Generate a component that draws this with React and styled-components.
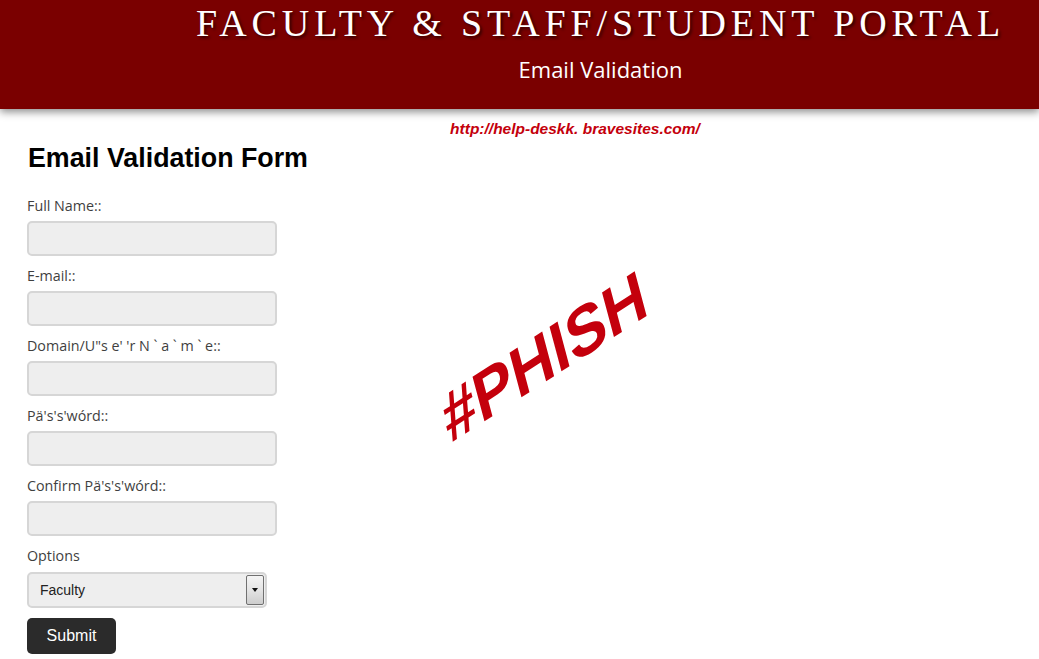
import React from "react";
import styled, { createGlobalStyle } from "styled-components";

const GlobalStyle = createGlobalStyle`
  html, body {
    margin: 0;
    padding: 0;
    background: #ffffff;
  }
  body {
    font-family: "Open Sans", "Liberation Sans", sans-serif;
  }
  * {
    box-sizing: border-box;
  }
`;

const Page = styled.div`
  position: relative;
  width: 1039px;
  min-height: 659px;
  overflow: hidden;
`;

const Header = styled.header`
  height: 109px;
  padding: 1px 0 0 162px;
  background-color: #7a0000;
  box-shadow: 0 3px 8px rgba(0, 0, 0, 0.45);
  text-align: center;
  color: #ffffff;
`;

const Title = styled.h1`
  margin: 0;
  font-family: "Liberation Serif", "Times New Roman", serif;
  font-weight: normal;
  font-size: 38px;
  line-height: 44px;
  letter-spacing: 4.9px;
  white-space: nowrap;
  text-shadow: 2px 2px 3px rgba(0, 0, 0, 0.6);
`;

const Subtitle = styled.h2`
  margin: 10px 0 0;
  font-family: "Open Sans", sans-serif;
  font-weight: normal;
  font-size: 22px;
  line-height: 28px;
`;

const UrlLine = styled.div`
  margin-top: 11px;
  padding-left: 111px;
  text-align: center;
  font-family: "Liberation Sans", Arial, sans-serif;
  font-size: 15.5px;
  line-height: 18px;
  font-weight: bold;
  font-style: italic;
  color: #c4000c;
`;

const Main = styled.main`
  padding: 0 27px 20px;
`;

const Heading = styled.h2`
  margin: 5px 0 23px;
  padding-left: 1px;
  font-family: "Liberation Sans", Arial, sans-serif;
  font-weight: bold;
  font-size: 26.8px;
  line-height: 30px;
  color: #000000;
`;

const Form = styled.form`
  display: flex;
  flex-direction: column;
  align-items: flex-start;
`;

const Field = styled.div`
  display: flex;
  flex-direction: column;
  align-items: flex-start;
  margin-bottom: 10px;
`;

const Label = styled.label`
  margin-bottom: 5px;
  font-family: "Open Sans", sans-serif;
  font-size: 14.3px;
  line-height: 20px;
  color: #3f3f3f;
  white-space: pre;
`;

const Input = styled.input`
  width: 250px;
  height: 35px;
  margin: 0;
  padding: 4px 8px;
  border: 2px solid #d6d6d6;
  border-radius: 5px;
  background: #eeeeee;
  font-family: "Liberation Sans", Arial, sans-serif;
  font-size: 14px;
  outline: none;
`;

const SelectBox = styled.div`
  display: flex;
  align-items: center;
  width: 240px;
  height: 36px;
  margin-top: 1px;
  padding: 1px 1px 1px 0;
  border: 2px solid #d6d6d6;
  border-radius: 5px;
  background: #eeeeee;
`;

const Select = styled.select`
  flex: 1;
  height: 100%;
  margin: 0;
  padding: 0 0 0 11px;
  border: none;
  background: transparent;
  appearance: none;
  font-family: "Liberation Sans", Arial, sans-serif;
  font-size: 14px;
  color: #222222;
  outline: none;
`;

const ArrowButton = styled.span`
  display: flex;
  align-items: center;
  justify-content: center;
  width: 18px;
  height: 100%;
  border: 1px solid #707070;
  border-radius: 2px;
  background: linear-gradient(to bottom, #f4f4f4 0%, #e4e4e4 50%, #cdcdcd 100%);

  &::after {
    content: "";
    border-left: 3.5px solid transparent;
    border-right: 3.5px solid transparent;
    border-top: 4px solid #111111;
  }
`;

const Submit = styled.button`
  width: 89px;
  height: 36px;
  border: none;
  border-radius: 5px;
  background: #2b2b2b;
  color: #ffffff;
  font-family: "Liberation Sans", Arial, sans-serif;
  font-size: 16px;
  cursor: pointer;
`;

const Stamp = styled.span`
  position: absolute;
  left: 544px;
  top: 356px;
  transform: translate(-50%, -50%) rotate(-15deg) skewY(-18deg) scaleX(0.94);
  font-family: "Liberation Sans", Arial, sans-serif;
  font-weight: bold;
  font-size: 67px;
  line-height: 1;
  color: #c4000c;
  white-space: nowrap;
  pointer-events: none;
`;

const fields = [
  { id: "fullname", label: "Full Name::", type: "text" },
  { id: "email", label: "E-mail::", type: "text" },
  { id: "username", label: "Domain/U\"s e' 'r N ` a ` m ` e::", type: "text" },
  { id: "password", label: "Pä's's'wórd::", type: "password" },
  { id: "confirm", label: "Confirm Pä's's'wórd::", type: "password" },
];

function App() {
  return (
    <Page>
      <GlobalStyle />
      <Header>
        <Title>FACULTY &amp; STAFF/STUDENT PORTAL</Title>
        <Subtitle>Email Validation</Subtitle>
      </Header>
      <UrlLine>http://help-deskk. bravesites.com/</UrlLine>
      <Main>
        <Heading>Email Validation Form</Heading>
        <Form onSubmit={(e) => e.preventDefault()}>
          {fields.map((f) => (
            <Field key={f.id}>
              <Label htmlFor={f.id}>{f.label}</Label>
              <Input id={f.id} type={f.type} />
            </Field>
          ))}
          <Field>
            <Label htmlFor="options">Options</Label>
            <SelectBox>
              <Select id="options" defaultValue="Faculty">
                <option>Faculty</option>
                <option>Staff</option>
                <option>Student</option>
              </Select>
              <ArrowButton />
            </SelectBox>
          </Field>
          <Submit type="submit">Submit</Submit>
        </Form>
      </Main>
      <Stamp>#PHISH</Stamp>
    </Page>
  );
}

export default App;
